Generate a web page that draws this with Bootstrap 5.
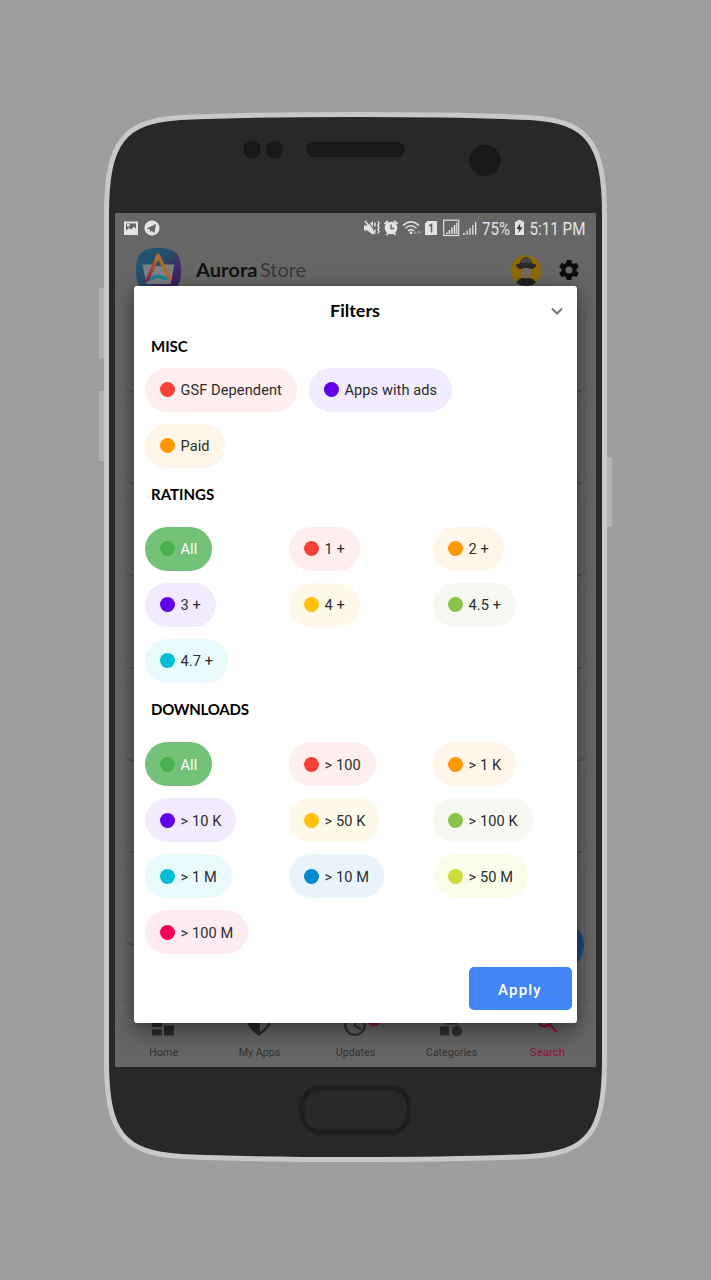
<!DOCTYPE html>
<html lang="en">
<head>
<meta charset="utf-8">
<meta name="viewport" content="width=device-width, initial-scale=1">
<title>Aurora Store – Filters</title>
<link rel="stylesheet" href="https://cdn.jsdelivr.net/npm/bootstrap@5.3.0/dist/css/bootstrap.min.css">
<style>
  body { background:#9e9e9e; font-family:Roboto, sans-serif; }
  .stage { width:711px; height:1280px; padding:213px 0 0 115px; overflow:hidden; }
  .phone-shell { left:0; top:0; }
  .screen { width:481px; height:854px; background:#666; color:#333; }
  .statusbar { height:30px; padding:0 8px 0 8px; color:#e4e4e4; }
  .status-time { overflow:visible; margin-left:2px; }
  .appbar { height:56px; padding:5px 15px 0 21px; }
  .brand { margin-left:15px; }
  .settings { margin:10px 0 0 15px; }
  .results { padding:9px 11px 0; overflow:hidden; }
  .result-row { height:84px; margin-bottom:8.2px; border:1px solid #5d5d5d; border-top-color:#646464; border-bottom-color:#4c4c4c; border-radius:7px; flex:none; }
  .fab { width:54px; height:54px; right:12px; top:705px; background:#1d4a80; }
  .bottombar { height:66px; background:#666; border-top:1px solid #606060; }
  .tab-item { width:96px; font-size:10.8px; line-height:14px; padding:11px 0 0 1px; letter-spacing:-.05px; }
  .tab-item svg { display:block; margin:0 auto 9px; position:relative; left:-1px; }
  .tab-item.on { color:#8c1237; font-size:11.6px; }
  .tab-item.on svg { margin-bottom:8px; }
  .sheet { left:18.5px; top:72.5px; width:443.5px; height:737px; border-radius:3px; box-shadow:0 9px 22px rgba(0,0,0,.4), 0 0 12px rgba(0,0,0,.18); padding:0 5.5px 12.5px 11.5px; color:#000; }
  .sheet-title { height:50px; margin-left:-6px; font-family:Lato, sans-serif; font-weight:700; }
  .chev { right:12px; top:17.5px; }
  .group-title { font-family:Lato, sans-serif; font-weight:700; font-size:15px; line-height:20px; margin:0; padding-left:6px; }
  .group-title.long { letter-spacing:-.25px; }
  .group-title + .wrap-row { display:flex; flex-wrap:wrap; gap:12px; max-width:360px; margin-top:12px; }
  .trio { display:grid; grid-template-columns:repeat(3,144px); gap:12px 0; justify-items:start; margin-top:23px; }
  .trio + .group-title, .wrap-row + .group-title { margin-top:16.4px; }
  .pill { display:inline-flex; align-items:center; height:44px; border-radius:22px; padding:0 15px; font-size:14.6px; letter-spacing:.08px; color:#2c2c2c; background:var(--soft); white-space:nowrap; }
  .pill b { font-weight:400; padding-top:3px; }
  .pill::before { content:""; width:15px; height:15px; border-radius:50%; background:var(--hue); margin-right:5.5px; }
  .red{--hue:#f44336;--soft:#feeeed} .violet{--hue:#6200ea;--soft:#f2eafd} .orange{--hue:#ff9800;--soft:#fff6ea}
  .amber{--hue:#ffc107;--soft:#fff9e9} .leaf{--hue:#8bc34a;--soft:#f5f9f1} .cyan{--hue:#00bcd4;--soft:#e9fafd}
  .blue{--hue:#0288d1;--soft:#e8f4fa} .lime{--hue:#cddc39;--soft:#fbfdeb} .pink{--hue:#f50057;--soft:#feeaf1}
  .green{--hue:#4caf50;--soft:#74c178;color:#fff}
  .apply { width:103px; height:43px; background:#4285f4; color:#fff; border:0; border-radius:5px; font-size:15px; font-weight:500; letter-spacing:1.2px; padding:3px 0 0; }
  .apply:hover { background:#3b78e0; color:#fff; }
</style>
</head>
<body>
<main class="stage position-relative">
  <svg class="phone-shell position-absolute" width="711" height="1280" viewBox="0 0 711 1280" aria-hidden="true">
    <path fill="#b2b2b2" d="M99 288h6v70h-6zM99 391h6v70h-6zM606 457h6v70h-6z"/>
    <path fill="#282828" stroke="#c8c8c8" stroke-width="5" d="M106.500 215C106.500 142 123 121 181 117.500Q250 114.500 355.500 114.500T530 117.500C588 121 604.500 142 604.500 215V1060C604.500 1133 588 1153 530 1156.500Q461 1159.500 355.500 1159.500T181 1156.500C123 1153 106.500 1133 106.500 1060Z"/>
    <g fill="#191919"><circle cx="252" cy="149.500" r="9"/><circle cx="274.500" cy="149.500" r="9"/><rect x="306" y="142" width="99" height="15" rx="7.500"/><circle cx="485" cy="160.500" r="15.700"/></g>
    <rect x="302" y="1088" width="107" height="44" rx="18" fill="none" stroke="#1e1e1e" stroke-width="5"/>
  </svg>

  <section class="screen position-relative overflow-hidden d-flex flex-column">
    <div class="statusbar d-flex align-items-center flex-shrink-0">
      <svg width="40" height="18" viewBox="0 0 40 18" fill="#e4e4e4">
        <path fill-rule="evenodd" d="M1 2.500h14V16H1zM3 4.500v7l3-2.500 2 1.500 3-3 2 2.500V4.500zM4 5h2.500v2.500H4z"/>
        <circle cx="29" cy="9" r="7.600"/><path fill="#666" d="m23.500 9.500 9.500-4.500-1.500 9-3-2.200-1.500 1.500v-2.700z"/>
      </svg>
      <svg class="ms-auto" width="114" height="18" viewBox="0 0 114 18" fill="#e4e4e4">
        <path d="M0 6.500h3.500L9 2v14l-5.500-4.500H0z"/><path d="m2.800 1 10 13" stroke="#666" stroke-width="1.200"/><path d="m1 2 10 13" stroke="#e4e4e4" stroke-width="1.600"/><path d="M11 3.500v4M11 10.500v3M14 2.500l1 2-1 2 1 2-1 2 1 2-1 2" fill="none" stroke="#e4e4e4" stroke-width="1.500"/>
        <circle cx="27" cy="9" r="6.300"/><path d="m20.500 5 3.500-3M33.500 5l-3.500-3M22.500 16l1.500-2M31.500 16l-1.500-2" stroke="#e4e4e4" stroke-width="1.800"/><path d="M27 5.500V9.500H30.500" fill="none" stroke="#666" stroke-width="1.400"/>
        <g fill="none" stroke="#e4e4e4" stroke-width="1.500"><path d="M39 6.500q8-7.500 16 0M41.500 9.200q5.500-5 11 0M44 12q3-2.800 6 0"/></g><circle cx="47" cy="13.800" r="1.400"/><path fill="#949494" d="m51 12 2 3h-4zM53 14h4l-2-3z"/>
        <path d="M63.500 2H73v14H61V4.500z"/><path d="m65 7 2.500-1.500v8" fill="none" stroke="#666" stroke-width="1.600"/>
        <rect x="79.700" y="1.200" width="15" height="15.300" fill="none" stroke="#e4e4e4" stroke-width="1.200"/><path d="M82 13.500h1.800V15H82zM84.600 11h1.500v4h-1.500zM87.200 8.500h1.500V15h-1.500zM89.800 6h1.500v9h-1.500zM92.200 3.500h1.200V15h-1.200z"/>
        <path d="M99 14h2v1.700h-2zM102.500 11.500h1.300v4.200h-1.300zM105.300 9h1.300v6.700h-1.300zM108.200 6h1.300v9.700h-1.300zM111 3h1.300v12.700H111z"/>
      </svg>
      <svg class="status-time" width="108" height="30" viewBox="0 0 108 30">
        <g fill="#e4e4e4" font-family="Roboto, sans-serif" font-size="17.500">
          <text x="2" y="21.500" textLength="28" lengthAdjust="spacingAndGlyphs">75%</text>
          <path d="M35 8.500h2.500V7h4v1.500H44V22h-9z"/><path fill="#333" d="m40.500 10-4 6h2.700l-.7 4 4-5.700h-2.700z"/>
          <text x="49.500" y="21.500" textLength="56" lengthAdjust="spacingAndGlyphs">5:11 PM</text>
        </g>
      </svg>
    </div>

    <div class="appbar d-flex flex-shrink-0">
      <svg width="45" height="45" viewBox="0 0 45 45">
        <defs><linearGradient id="logoBg" x1="0" y1="0" x2="1" y2="1"><stop offset="0" stop-color="#17577a"/><stop offset=".4" stop-color="#244f68"/><stop offset=".75" stop-color="#432464"/><stop offset="1" stop-color="#211d46"/></linearGradient>
        <linearGradient id="logoLeg" gradientUnits="userSpaceOnUse" x1="22" y1="8" x2="12" y2="34"><stop offset="0" stop-color="#b08024"/><stop offset=".5" stop-color="#a04038"/><stop offset="1" stop-color="#86205a"/></linearGradient></defs>
        <path fill="url(#logoBg)" d="M22.500 0C39 0 45 6 45 22.500S39 45 22.500 45 0 39 0 22.500 6 0 22.500 0z"/>
        <path fill="#7c8084" d="M6.500 16.500h32L34.500 36h-24z"/>
        <path fill="#2c5268" d="m22 8 5 10H17z"/>
        <path d="M14 31.500q8-6 17 0" fill="none" stroke="#1a8390" stroke-width="3.600"/>
        <path d="M22 7.500 11.500 32" stroke="url(#logoLeg)" stroke-width="3.600" stroke-linecap="round"/><path d="m22 7.500 12 23.500" stroke="#ac6a2c" stroke-width="3.600" stroke-linecap="round"/>
      </svg>
      <svg class="brand" width="112" height="46" viewBox="0 0 112 46" font-family="Lato, sans-serif" font-size="19.500">
        <text x="0" y="28.500" fill="#111" font-weight="700" textLength="61.500" lengthAdjust="spacingAndGlyphs">Aurora</text>
        <text x="64" y="28.500" fill="#363636" textLength="46" lengthAdjust="spacingAndGlyphs">Store</text>
      </svg>
      <svg class="ms-auto" width="32" height="42" viewBox="0 0 32 42">
        <clipPath id="face"><circle cx="16" cy="22.500" r="15.500"/></clipPath>
        <circle cx="16" cy="22.500" r="15.500" fill="#8c6a0a"/>
        <g clip-path="url(#face)"><path fill="#1f2028" d="M5 40q1-9 8-10h6q8 1 8 10z"/><path fill="#756a5c" d="M11 19h10v7q-5 9-10 0z"/><path fill="#292929" d="M6 16q4 1 5-4 5-6 10 0 1 5 5 4 0 5-5 5-5-2-10 0-5 0-5-5z"/><path fill="#444" d="M11 12q5-6 10 0l.5 3h-11z"/></g>
      </svg>
      <svg class="settings" width="24" height="24" viewBox="0 0 24 24" fill="#0b0b0b"><path d="M19.430 12.980c.04-.32.070-.64.070-.98s-.03-.66-.07-.98l2.110-1.650c.19-.15.240-.42.120-.64l-2-3.460c-.12-.22-.39-.3-.61-.22l-2.490 1c-.52-.4-1.080-.73-1.690-.98l-.38-2.650C14.460 2.180 14.250 2 14 2h-4c-.25 0-.46.180-.49.420l-.38 2.650c-.61.250-1.170.590-1.690.980l-2.490-1c-.23-.09-.49 0-.61.220l-2 3.460c-.13.220-.07.490.12.640l2.110 1.650c-.04.320-.07.650-.07.980s.03.660.070.980l-2.110 1.650c-.19.150-.24.420-.12.640l2 3.460c.12.220.39.300.61.220l2.490-1c.52.400 1.080.730 1.690.980l.38 2.650c.03.240.24.420.49.420h4c.25 0 .46-.18.490-.42l.38-2.650c.61-.25 1.170-.59 1.690-.98l2.490 1c.23.090.49 0 .61-.22l2-3.460c.12-.22.070-.49-.12-.64l-2.110-1.650zM12 15.500A3.500 3.500 0 1 1 12 8.500a3.500 3.500 0 0 1 0 7z"/></svg>
    </div>

    <div class="results flex-grow-1 d-flex flex-column">
      <div class="result-row"></div><div class="result-row"></div><div class="result-row"></div><div class="result-row"></div>
      <div class="result-row"></div><div class="result-row"></div><div class="result-row"></div><div class="result-row"></div>
    </div>
    <div class="fab position-absolute rounded-circle"></div>

    <nav class="bottombar d-flex flex-shrink-0 text-center">
      <div class="tab-item"><svg width="28" height="24" viewBox="0 0 28 24" fill="#2b2b2b"><path d="M3 0h10v14H3zM3 16.500h10v6H3zM15 0h10v10H15zM15 12.500h10v10H15z"/></svg>Home</div>
      <div class="tab-item"><svg width="28" height="24" viewBox="0 0 28 24"><path d="M2 3l12-3 12 3v6q-2 7-12 14Q4 16 2 9z" fill="#2b2b2b"/><path d="M15 3l8 2v5q-1 4-8 9z" fill="#666"/></svg>My Apps</div>
      <div class="tab-item"><svg width="56" height="24" viewBox="0 0 56 24"><circle cx="28" cy="12" r="9.800" fill="none" stroke="#303030" stroke-width="2.200"/><path d="M28 6v7l6 3" fill="none" stroke="#303030" stroke-width="2"/><circle cx="47" cy="5" r="8.200" fill="#84152f"/></svg>Updates</div>
      <div class="tab-item"><svg width="28" height="24" viewBox="0 0 28 24" fill="#303030"><path d="M14 0l7 11.500H7zM3 13.500h9v9H3z"/><circle cx="20" cy="18" r="5.200"/></svg>Categories</div>
      <div class="tab-item on"><svg width="28" height="24" viewBox="0 0 28 24" fill="none" stroke="#8c1237" stroke-width="2.400"><circle cx="11.500" cy="6.500" r="6.800"/><path d="m16 11 8 8"/></svg>Search</div>
    </nav>

    <div class="sheet position-absolute bg-white d-flex flex-column" role="dialog" aria-label="Filters">
      <div class="sheet-title"><svg width="54" height="50" viewBox="0 0 54 50" class="d-block mx-auto"><text x="2" y="31" font-size="17.500" textLength="50" lengthAdjust="spacingAndGlyphs">Filters</text></svg></div>
      <svg class="chev position-absolute" width="16" height="16" viewBox="0 0 16 16" fill="none" stroke="#737373" stroke-width="2"><path d="m3 5.500 5 5 5-5"/></svg>

      <h2 class="group-title">MISC</h2>
      <div class="wrap-row">
        <span class="pill red"><b>GSF Dependent</b></span><span class="pill violet"><b>Apps with ads</b></span><span class="pill orange"><b>Paid</b></span>
      </div>

      <h2 class="group-title">RATINGS</h2>
      <div class="trio">
        <span class="pill green"><b>All</b></span><span class="pill red"><b>1 +</b></span><span class="pill orange"><b>2 +</b></span>
        <span class="pill violet"><b>3 +</b></span><span class="pill amber"><b>4 +</b></span><span class="pill leaf"><b>4.5 +</b></span>
        <span class="pill cyan"><b>4.7 +</b></span>
      </div>

      <h2 class="group-title long">DOWNLOADS</h2>
      <div class="trio">
        <span class="pill green"><b>All</b></span><span class="pill red"><b>&gt; 100</b></span><span class="pill orange"><b>&gt; 1 K</b></span>
        <span class="pill violet"><b>&gt; 10 K</b></span><span class="pill amber"><b>&gt; 50 K</b></span><span class="pill leaf"><b>&gt; 100 K</b></span>
        <span class="pill cyan"><b>&gt; 1 M</b></span><span class="pill blue"><b>&gt; 10 M</b></span><span class="pill lime"><b>&gt; 50 M</b></span>
        <span class="pill pink"><b>&gt; 100 M</b></span>
      </div>
      <button class="btn apply ms-auto mt-auto" type="button">Apply</button>
    </div>
  </section>
</main>
<script src="https://cdn.jsdelivr.net/npm/bootstrap@5.3.0/dist/js/bootstrap.bundle.min.js"></script>
</body>
</html>
